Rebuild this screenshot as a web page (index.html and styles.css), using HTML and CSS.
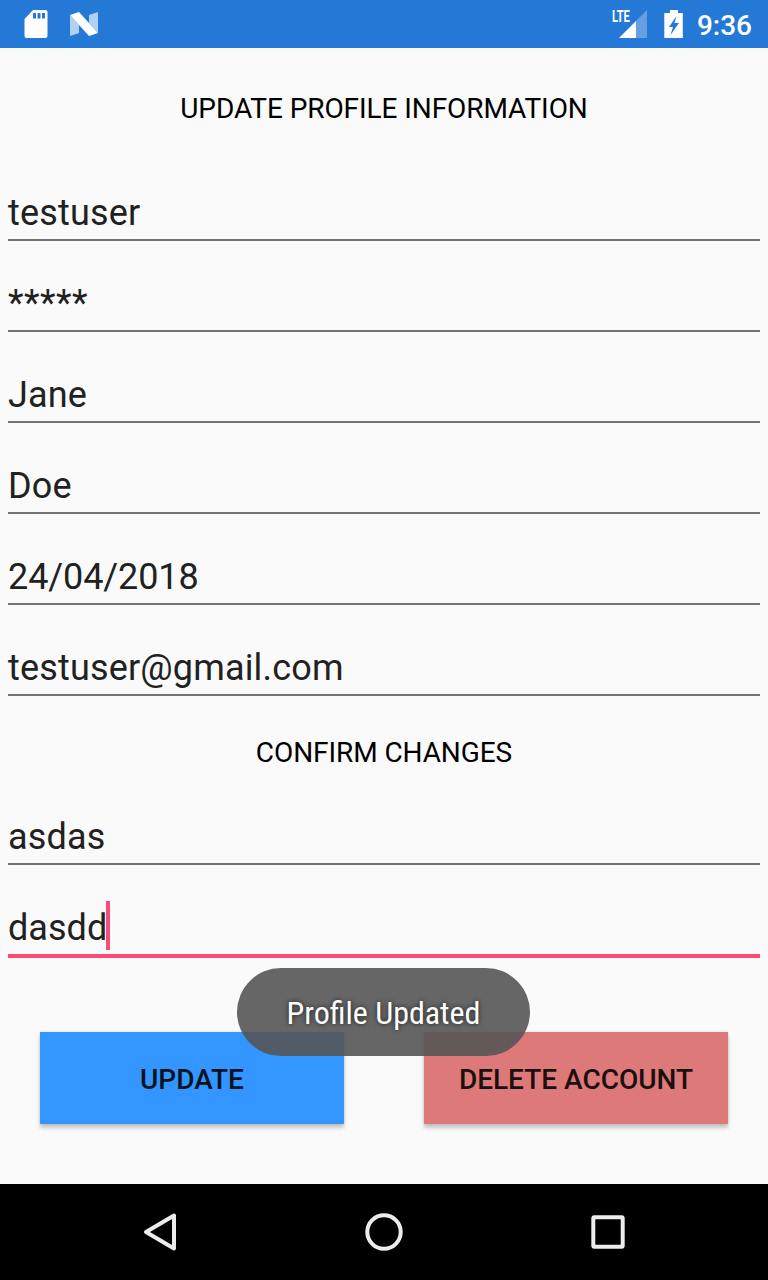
FILE: index.html
```html
<!DOCTYPE html>
<html lang="en">
<head>
<meta charset="utf-8">
<title>Update Profile Information</title>
<link rel="stylesheet" href="styles.css">
</head>
<body>
<div class="screen">
  <header class="status-bar">
    <div class="notifications">
      <svg width="24" height="30" viewBox="0 0 24 30"><path fill="#fff" fill-rule="evenodd" d="M9 1h12.500a2 2 0 0 1 2 2v24a2 2 0 0 1-2 2h-19a2 2 0 0 1-2-2V10ZM9 4v5.500h3V4ZM13.500 4v5.500h3V4ZM18 4v5.500h3V4Z"/></svg>
      <svg width="30" height="30" viewBox="0 0 30 30"><path fill="#fff" fill-opacity=".65" d="M1 6l9 10v8L1 27ZM29 3v21l-9-10V6Z"/><path fill="#fff" d="M1 6l9-3 19 21-9 3Z"/></svg>
    </div>
    <div class="system">
      <div class="signal">
        <span class="network">LTE</span>
        <svg width="30" height="30" viewBox="0 0 30 30"><path fill="#fff" fill-opacity=".3" d="M18 12 29 1v28H18Z"/><path fill="#fff" d="M18 12v17H1Z"/></svg>
      </div>
      <svg class="battery" width="20" height="30" viewBox="0 0 20 30"><path fill="#fff" fill-rule="evenodd" d="M6 1h8v3h4.800v25H.3V4H6ZM12.500 7 5 18h4L6.500 26 15 14h-4.500Z"/></svg>
      <span class="clock">9:36</span>
    </div>
  </header>
  <main class="content">
    <h1 class="title">UPDATE PROFILE INFORMATION</h1>
    <div class="field">testuser</div>
    <div class="field password">*****</div>
    <div class="field">Jane</div>
    <div class="field">Doe</div>
    <div class="field date">24/04/2018</div>
    <div class="field">testuser@gmail.com</div>
    <h2 class="title confirm">CONFIRM CHANGES</h2>
    <div class="field">asdas</div>
    <div class="field focused"><span class="value">dasdd<i class="caret"></i></span></div>
    <div class="actions">
      <button class="button update">UPDATE</button>
      <button class="button delete">DELETE ACCOUNT</button>
    </div>
  </main>
  <nav class="nav-bar">
    <svg width="40" height="40" viewBox="0 0 40 40"><path d="M34 3.500v33L6 20Z"/></svg>
    <svg width="40" height="40" viewBox="0 0 40 40"><circle cx="20" cy="20" r="16.700"/></svg>
    <svg width="40" height="40" viewBox="0 0 40 40"><rect x="5.300" y="5.300" width="29.400" height="29.400" rx="1"/></svg>
  </nav>
  <div class="toast"><span class="toast-text">Profile Updated</span></div>
</div>
</body>
</html>
```
FILE: styles.css
```css
* { box-sizing: border-box; }
body {
  margin: 0;
  background: #fafafa;
  font-family: Roboto, "Liberation Sans", sans-serif;
}
svg { display: block; }
.screen {
  position: relative;
  display: flex;
  flex-direction: column;
  width: 768px;
  height: 1280px;
  overflow: hidden;
}
.status-bar {
  display: flex;
  justify-content: space-between;
  align-items: center;
  height: 48px;
  padding: 0 16px 0 24px;
  background: #2478d6;
  color: #fff;
}
.notifications { display: flex; gap: 21px; }
.system { display: flex; align-items: center; }
.signal { position: relative; }
.network {
  position: absolute;
  left: -6px;
  top: -1px;
  font-size: 17px;
  line-height: 17px;
  font-weight: 700;
  transform: scaleX(.65);
  transform-origin: 0 0;
}
.battery { margin-left: 16px; }
.clock {
  margin-left: 13px;
  font-size: 28px;
  line-height: 33px;
  font-weight: 500;
  padding-top: 3px;
}
.content {
  flex: 1;
  padding: 44px 8px 0;
}
.title {
  margin: 0 0 25px;
  font-size: 28px;
  line-height: 33px;
  font-weight: 400;
  letter-spacing: -.08px;
  color: #000;
  text-align: center;
}
.confirm { margin: 40px 0 5px; }
.field {
  padding: 42px 0 5px;
  border-bottom: 2px solid #737373;
  font-size: 36px;
  line-height: 42px;
  letter-spacing: .17px;
  color: #212121;
}
.password {
  padding: 41px 0 6px;
  letter-spacing: .5px;
}
.date { letter-spacing: -.1px; }
.focused {
  border-bottom: 4px solid #fb4b76;
  letter-spacing: .05px;
}
.value { position: relative; }
.caret {
  position: absolute;
  left: 98px;
  top: -6px;
  width: 4px;
  height: 49px;
  background: #fb4b76;
}
.actions {
  display: flex;
  gap: 80px;
  padding: 74px 32px 0;
}
.button {
  flex: 1;
  height: 92px;
  padding: 2px 0 0;
  border: 0;
  font: 500 28px/33px Roboto, "Liberation Sans", sans-serif;
  box-shadow: 0 4px 4px rgba(0, 0, 0, .2), 0 0 3px rgba(0, 0, 0, .12);
}
.update { background: #3395ff; color: #07121f; }
.delete { background: #de7979; color: #1b0f0f; }
.nav-bar {
  display: flex;
  justify-content: center;
  align-items: center;
  gap: 184px;
  height: 96px;
  background: #000;
}
.nav-bar svg {
  fill: none;
  stroke: #ececec;
  stroke-width: 4;
  stroke-linejoin: round;
}
.toast {
  position: absolute;
  left: 237px;
  top: 968px;
  display: flex;
  justify-content: center;
  align-items: center;
  width: 293px;
  height: 88px;
  border-radius: 44px;
  background: rgba(85, 85, 85, .9);
  color: #fff;
}
.toast-text {
  font-family: "Roboto Condensed", Roboto, sans-serif;
  font-size: 32px;
  line-height: 38px;
  padding-top: 2px;
  white-space: nowrap;
  text-shadow: 0 0 5px rgba(0, 0, 0, .73);
}
```
